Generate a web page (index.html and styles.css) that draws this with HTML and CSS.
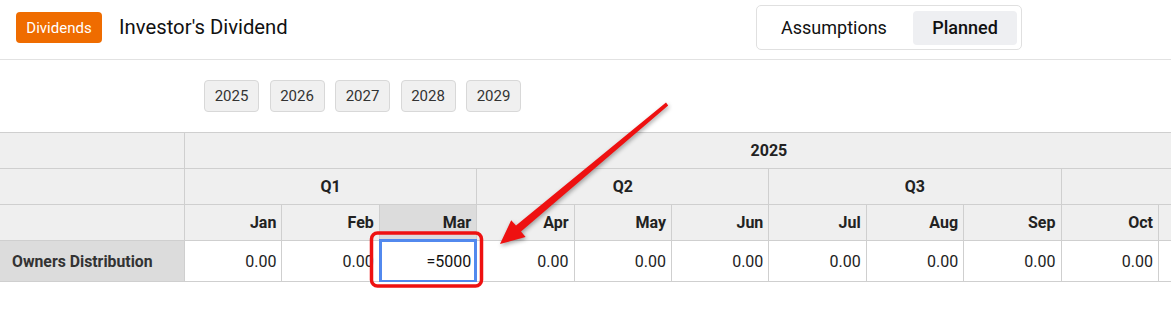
FILE: index.html
```html
<!DOCTYPE html>
<html>
<head>
<meta charset="utf-8">
<link rel="stylesheet" href="styles.css">
</head>
<body>
<header class="topbar">
  <div class="title-group">
    <span class="badge">Dividends</span>
    <h1 class="title">Investor's Dividend</h1>
  </div>
  <div class="toggle">
    <button class="toggle-btn">Assumptions</button>
    <button class="toggle-btn active">Planned</button>
  </div>
</header>
<div class="years">
  <button class="year-btn">2025</button>
  <button class="year-btn">2026</button>
  <button class="year-btn">2027</button>
  <button class="year-btn">2028</button>
  <button class="year-btn">2029</button>
</div>
<div class="grid-wrap">
  <table class="grid">
    <colgroup>
      <col class="c-label">
      <col class="c-m"><col class="c-m"><col class="c-m"><col class="c-m"><col class="c-m"><col class="c-m">
      <col class="c-m"><col class="c-m"><col class="c-m"><col class="c-m"><col class="c-m"><col class="c-m">
    </colgroup>
    <thead>
      <tr>
        <th class="h-label"></th>
        <th class="h-center" colspan="12">2025</th>
      </tr>
      <tr>
        <th class="h-label"></th>
        <th class="h-center" colspan="3">Q1</th>
        <th class="h-center" colspan="3">Q2</th>
        <th class="h-center" colspan="3">Q3</th>
        <th class="h-center" colspan="3"></th>
      </tr>
      <tr>
        <th class="h-label"></th>
        <th class="h-month">Jan</th>
        <th class="h-month">Feb</th>
        <th class="h-month sel">Mar</th>
        <th class="h-month">Apr</th>
        <th class="h-month">May</th>
        <th class="h-month">Jun</th>
        <th class="h-month">Jul</th>
        <th class="h-month">Aug</th>
        <th class="h-month">Sep</th>
        <th class="h-month">Oct</th>
        <th class="h-month"></th>
        <th class="h-month"></th>
      </tr>
    </thead>
    <tbody>
      <tr>
        <td class="row-label">Owners Distribution</td>
        <td class="val">0.00</td>
        <td class="val">0.00</td>
        <td class="val editing"><div class="editor">=5000</div></td>
        <td class="val">0.00</td>
        <td class="val">0.00</td>
        <td class="val">0.00</td>
        <td class="val">0.00</td>
        <td class="val">0.00</td>
        <td class="val">0.00</td>
        <td class="val">0.00</td>
        <td class="val"></td>
        <td class="val"></td>
      </tr>
    </tbody>
  </table>
</div>
<svg class="annotation" width="1171" height="314" viewBox="0 0 1171 314">
  <rect x="371.5" y="233" width="110" height="53" rx="6" ry="6" fill="none" stroke="#ee1111" stroke-width="3.5"/>
  <polygon class="arrow" points="500,244 511.2,220.2 516,225.6 666,102.6 668.2,105.4 521,231.6 525.6,237" fill="#ee1111"/>
</svg>
</body>
</html>
```
FILE: styles.css
```css
* { box-sizing: border-box; }
html, body { margin: 0; padding: 0; background: #fff; }
body {
  font-family: Roboto, "Noto Sans", "Liberation Sans", sans-serif;
  color: #222;
  width: 1171px;
  height: 314px;
  overflow: hidden;
  position: relative;
}
.topbar {
  height: 60px;
  border-bottom: 1px solid #e2e2e2;
  display: flex;
  align-items: flex-start;
  justify-content: space-between;
  padding: 0 149px 0 16px;
}
.title-group {
  display: flex;
  align-items: center;
  gap: 17px;
  margin-top: 12px;
}
.badge {
  display: inline-flex;
  align-items: center;
  justify-content: center;
  width: 86px;
  height: 31px;
  background: #ef6c00;
  color: #fff;
  border-radius: 4px;
  font-size: 15px;
}
.title {
  margin: 0;
  font-size: 20.3px;
  font-weight: 400;
  color: #111;
  line-height: 31px;
}
.toggle {
  margin-top: 5px;
  height: 45px;
  width: 266px;
  border: 1px solid #e0e0e0;
  border-radius: 5px;
  display: flex;
  align-items: center;
  justify-content: space-between;
  padding: 0 4px 0 6px;
}
.toggle-btn {
  border: none;
  background: transparent;
  font-family: inherit;
  font-size: 18px;
  color: #111;
  height: 34px;
  padding: 0 18px;
  border-radius: 4px;
}
.toggle-btn.active {
  background: #eeeff2;
  font-weight: 500;
  width: 104px;
}
.years {
  display: flex;
  gap: 10.5px;
  padding: 20px 0 0 204px;
  height: 72px;
}
.year-btn {
  width: 55px;
  height: 32px;
  border: 1px solid #d8d8d8;
  background: #f0f0f0;
  border-radius: 4px;
  font-family: inherit;
  font-size: 15px;
  color: #333;
  padding: 0;
}
.grid-wrap {
  width: 1171px;
  overflow: hidden;
}
.grid {
  border-collapse: collapse;
  table-layout: fixed;
  width: 1353px;
  margin-left: -1px;
}
.c-label { width: 185px; }
.c-m { width: 97.4px; }
.grid th, .grid td {
  border: 1px solid #cfcfcf;
  padding: 0 5px;
  white-space: nowrap;
  overflow: hidden;
}
.grid thead th {
  background: #efefef;
  height: 36px;
  font-size: 16px;
  font-weight: 700;
  color: #222;
}
.h-center { text-align: center; }
.h-month { text-align: right; }
.grid thead th.sel { background: #dcdcdc; }
.grid tbody td {
  height: 41px;
  font-size: 16px;
}
.grid tbody td.row-label {
  background: #dcdcdc;
  font-weight: 700;
  font-size: 15.8px;
  color: #333;
  padding-left: 12px;
}
.val {
  text-align: right;
  color: #222;
  background: #fff;
}
.val.editing {
  position: relative;
  padding: 0;
  overflow: visible;
}
.editor {
  position: absolute;
  left: -1px;
  right: -1px;
  top: -2px;
  bottom: -2px;
  border: 3px solid #5289ee;
  background: #fff;
  display: flex;
  align-items: center;
  justify-content: flex-end;
  padding-right: 3px;
  font-size: 16px;
  color: #111;
}
.annotation {
  position: absolute;
  left: 0;
  top: 0;
  pointer-events: none;
}
.arrow {
  filter: drop-shadow(1px 2px 2px rgba(0,0,0,0.35));
}
```
